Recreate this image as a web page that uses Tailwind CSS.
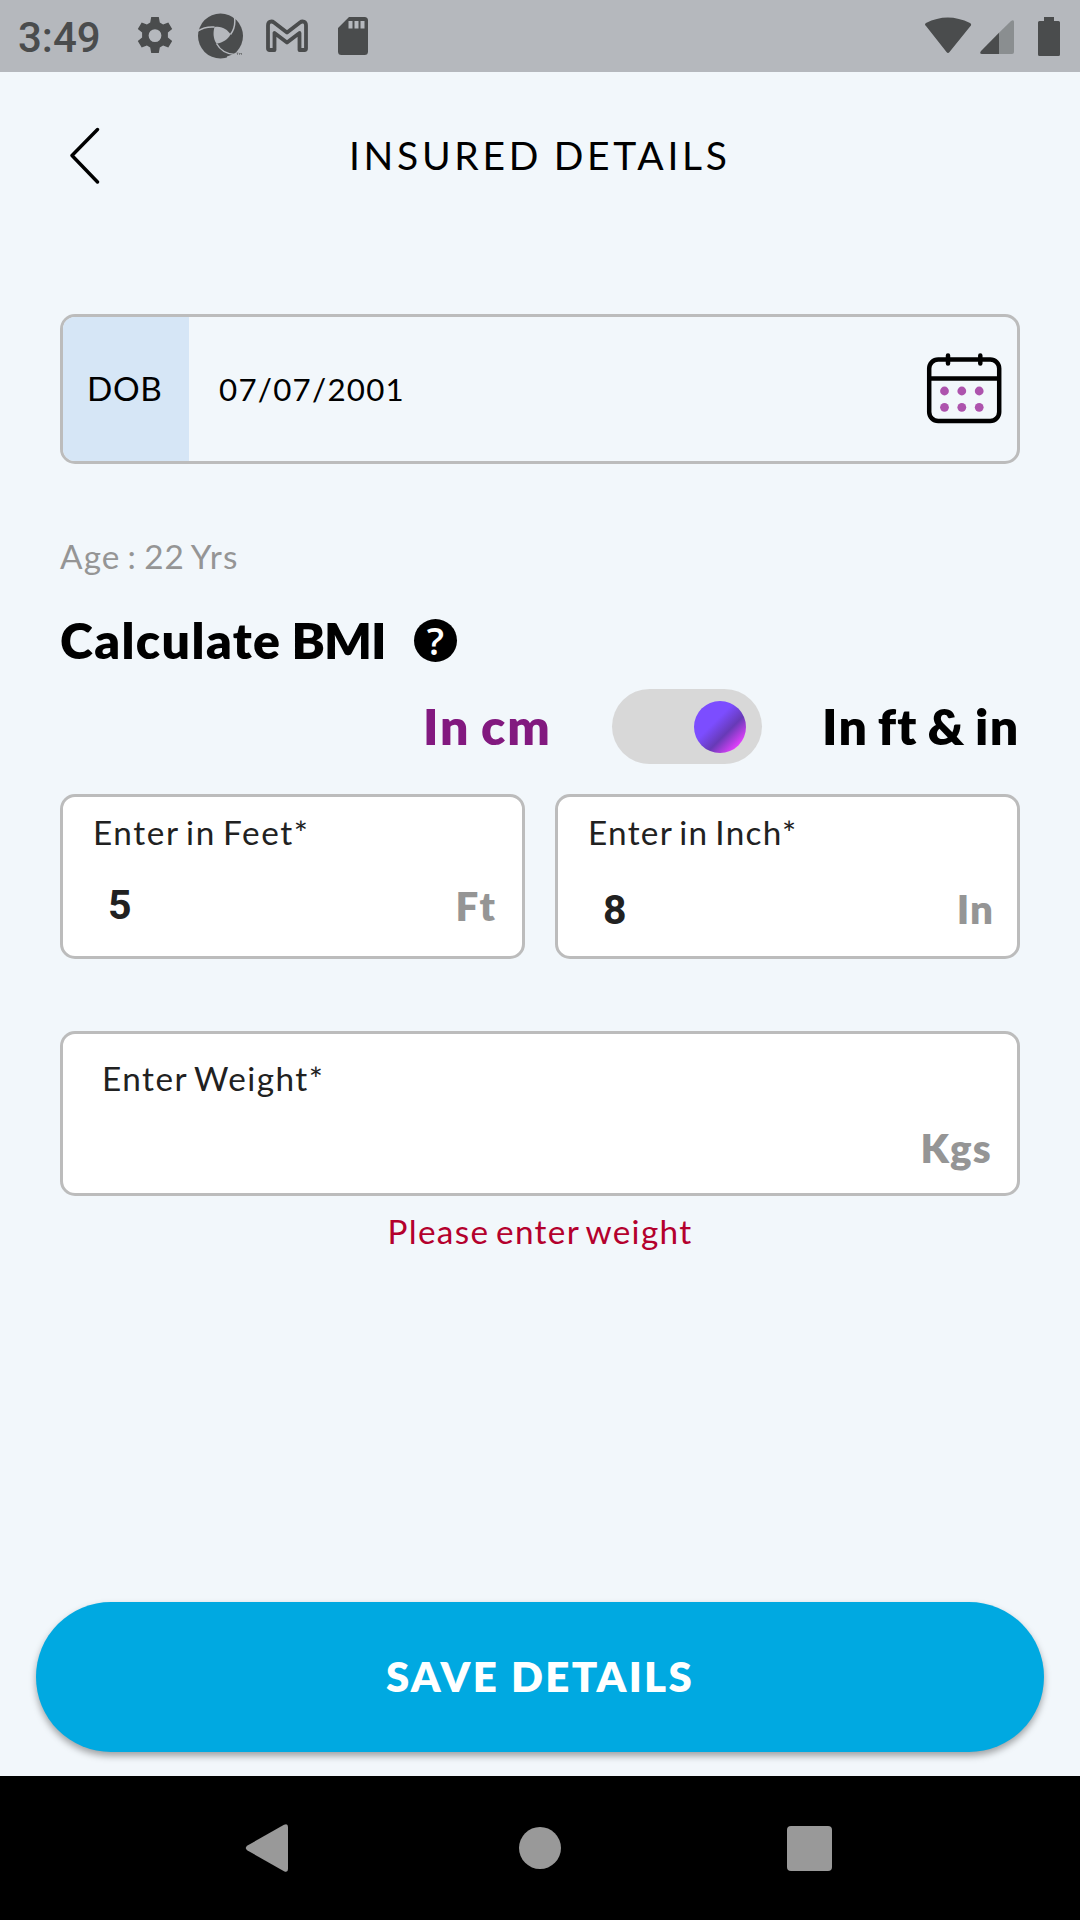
<!DOCTYPE html>
<html lang="en">
<head>
<meta charset="utf-8">
<title>Insured Details</title>
<script src="https://cdn.jsdelivr.net/npm/@tailwindcss/browser@4"></script>
</head>
<body class="bg-[#f2f7fb]">
<div class="flex h-[1920px] w-[1080px] flex-col overflow-hidden bg-[#f2f7fb] font-['Lato','Open_Sans',sans-serif] text-black">

  <!-- Status bar -->
  <div class="flex h-[72px] shrink-0 items-center bg-[#b5b8bd] pl-[18px] text-[#4a4c4d]">
    <span class="w-[117px] font-['Roboto',sans-serif] text-[42px] leading-[72px] font-medium whitespace-nowrap pt-[3px]">3:49</span>
    <svg class="h-10 w-10 shrink-0" viewBox="0 0 40 40" fill="currentColor">
      <path fill-rule="evenodd" d="M16.200 1h7.600l1 5.500 3.300 1.900 5.200-2 3.900 6.700-4.300 3.500v4.800l4.300 3.500-3.900 6.700-5.200-2-3.300 1.900-1 5.500h-7.600l-1-5.500-3.300-1.900-5.200 2-3.900-6.700 4.300-3.500v-4.800L2.800 13.100l3.900-6.700 5.200 2 3.300-1.900zM20 13.200a6.400 6.400 0 1 0 0 12.800 6.400 6.400 0 0 0 0-12.800z"/>
    </svg>
    <svg class="ml-[22px] h-[46px] w-[48px] shrink-0" viewBox="0 0 48 46">
      <circle cx="23.500" cy="23" r="22.500" fill="currentColor"/>
      <path d="M17.500 14C25 12.500 31 17 33.500 21.500C31 26 26 30 19.500 30.500C16 26 16 19 17.500 14Z" fill="#b5b8bd"/>
      <path d="M0 18.500C6 14.500 12 13.500 17.500 14M37.500 4C38.500 11 37 17 33.500 21.500M19.500 30.500C23 37 29 41 38 41.500" fill="none" stroke="#b5b8bd" stroke-width="1.500"/>
      <path d="M30 43.500L38 40.500l2 2-5 3.500h-5z" fill="#b5b8bd"/>
      <path d="M39.500 40h2M40.500 40v2M42.500 42v-2l1 1 1-1v2" fill="none" stroke="currentColor" stroke-width=".5"/>
    </svg>
    <svg class="ml-[20px] h-[34px] w-[44px] shrink-0" viewBox="0 0 44 34" fill="none" stroke="currentColor" stroke-width="3.800" stroke-linejoin="round">
      <path d="M3 29.500V6.500C3 2.500 6.500 1.500 9 3.500L22 13.500L35 3.500C37.500 1.500 41 2.500 41 6.500V29.500Q41 31 39.500 31H34.500V14L22 23.500L9.500 14V31H4.500Q3 31 3 29.500Z"/>
    </svg>
    <svg class="ml-[28px] h-[38px] w-[32px] shrink-0" viewBox="0 0 32 38" fill="currentColor">
      <path fill-rule="evenodd" d="M12 0H27.500Q31 0 31 3.500V34.500Q31 38 27.500 38H4.500Q1 38 1 34.500V11zM11.500 4v7.500h4V4zM17.500 4v7.500h4V4zM23.500 4v7.500h4V4z"/>
    </svg>
    <svg class="ml-auto h-[38px] w-[48px] shrink-0" viewBox="0 0 48 38" fill="currentColor">
      <path d="M2 9Q0 7.500 2 6Q23.500-5 46 6Q48 7.500 46.500 9L25.500 35Q24 37 22.500 35z"/>
    </svg>
    <svg class="ml-[7px] mt-[2px] h-[36px] w-[36px] shrink-0" viewBox="0 0 36 36">
      <path d="M20 13.800L32 2Q35 0 35 3V33Q35 35 33 35H20z" fill="#8a8e90"/>
      <path d="M20 13.800V35H3Q0 35 2 32z" fill="currentColor"/>
    </svg>
    <svg class="mr-[20px] ml-[23px] h-[39px] w-[22px] shrink-0" viewBox="0 0 22 39" fill="currentColor">
      <path d="M6 0H16V4H20.500Q22 4 22 5.500V37.500Q22 39 20.500 39H1.500Q0 39 0 37.500V5.500Q0 4 1.500 4H6z"/>
    </svg>
  </div>

  <!-- Header -->
  <header class="flex h-[168px] shrink-0 items-center pl-[70px]">
    <svg class="h-[58px] w-[30px] shrink-0" viewBox="0 0 30 58" fill="none" stroke="#000" stroke-width="3.400" stroke-linecap="round" stroke-linejoin="round"><path d="M27.500 2.500L2 28.500L27.500 55"/></svg>
    <h1 class="-mt-0.5 ml-[249px] text-[39px] leading-[60px] tracking-[3.700px] [word-spacing:-2px] whitespace-nowrap">INSURED DETAILS</h1>
  </header>

  <main class="flex flex-1 flex-col px-[60px] pt-[74px]">
    <!-- Date of birth -->
    <div class="flex h-[150px] shrink-0 items-center overflow-hidden rounded-[15px] border-[3px] border-[#bcbcbc]">
      <div class="flex h-full w-[126px] items-center bg-[#d6e6f6] pl-[24px] text-[33.300px] tracking-[0.600px]">DOB</div>
      <div class="ml-[30px] text-[31.300px] tracking-[1.250px]">07/07/2001</div>
      <svg class="mr-[15px] ml-auto h-[72px] w-[76px]" viewBox="0 0 76 72" fill="none" stroke="#000">
        <rect x="3.200" y="6.500" width="70" height="61.500" rx="9" stroke-width="4.500"/>
        <path d="M3 25.500H73" stroke-width="4.500"/>
        <path d="M22 2.500v8M54.300 2.500v8" stroke-width="4.500" stroke-linecap="round"/>
        <g fill="#ad53ad" stroke="none">
          <circle cx="18.500" cy="38" r="4.400"/><circle cx="35.800" cy="38" r="4.400"/><circle cx="53.200" cy="38" r="4.400"/>
          <circle cx="18.500" cy="54.300" r="4.400"/><circle cx="35.800" cy="54.300" r="4.400"/><circle cx="53.200" cy="54.300" r="4.400"/>
        </g>
      </svg>
    </div>

    <p class="mt-[72px] text-[33.300px] leading-[40px] tracking-[1.100px] [word-spacing:-2.500px] text-[#959595]">Age : 22 Yrs</p>

    <div class="mt-[34px] flex h-[60px] items-center">
      <h2 class="w-[354px] text-[50px] leading-[60px] font-extrabold tracking-[1.400px] [word-spacing:-3px] whitespace-nowrap">Calculate <span class="tracking-[-1px]">BMI</span></h2>
      <span class="flex h-[43px] w-[43px] items-center justify-center rounded-full bg-black font-['Open_Sans',sans-serif] text-[38px] leading-[43px] font-semibold text-white">?</span>
    </div>

    <!-- Unit switch -->
    <div class="mt-[19px] flex h-[75px] items-center text-[50px] font-extrabold whitespace-nowrap">
      <span class="ml-[363px] w-[189px] tracking-[1.900px] [word-spacing:-3px] text-[#82197f]">In cm</span>
      <div class="flex h-[75px] w-[150px] shrink-0 items-center justify-end rounded-full bg-[#d8d8d8] pr-4">
        <div class="h-[52px] w-[52px] rounded-full bg-[linear-gradient(135deg,#7c4dff_0%,#7c4dff_40%,#673ab7_62%,#e040fb_85%)]"></div>
      </div>
      <span class="ml-[60px] tracking-[1.200px] [word-spacing:-3px]">In ft &amp; in</span>
    </div>

    <!-- Height -->
    <div class="mt-[30px] grid grid-cols-2 gap-[30px] text-[#212121]">
      <div class="h-[165px] rounded-[15px] border-[3px] border-[#bcbcbc] bg-white pt-[15px] pl-[30px]">
        <div class="text-[33.300px] leading-[40px] tracking-[1.600px] [word-spacing:-3px]">Enter in Feet*</div>
        <div class="mt-[29px] flex items-center justify-between pr-[25px] pl-[15px] leading-[44px]">
          <span class="font-['Roboto',sans-serif] text-[41px] font-bold">5</span>
          <span class="pt-[3px] text-[40.300px] font-extrabold tracking-[2px] text-[#959595]">Ft</span>
        </div>
      </div>
      <div class="h-[165px] rounded-[15px] border-[3px] border-[#bcbcbc] bg-white pt-[15px] pl-[30px]">
        <div class="text-[33.300px] leading-[40px] tracking-[1.300px] [word-spacing:-3px]">Enter in Inch*</div>
        <div class="mt-[33px] flex items-center justify-between pr-[23px] pl-[15px] leading-[44px]">
          <span class="pt-[3px] font-['Roboto',sans-serif] text-[41px] font-bold">8</span>
          <span class="text-[40.300px] font-extrabold tracking-[1px] text-[#959595]">In</span>
        </div>
      </div>
    </div>

    <!-- Weight -->
    <div class="mt-[72px] h-[165px] shrink-0 rounded-[15px] border-[3px] border-[#bcbcbc] bg-white pt-[24px] pr-[25px] pl-[39px] text-[#212121]">
      <div class="text-[33.300px] leading-[40px] tracking-[1.500px] [word-spacing:-3px]">Enter Weight*</div>
      <div class="mt-[26px] text-right text-[40.300px] leading-[48px] font-extrabold tracking-[1.200px] text-[#959595]">Kgs</div>
    </div>
    <p class="mt-[15px] text-center text-[33.300px] leading-[40px] tracking-[1.300px] [word-spacing:-3px] text-[#b4002d]">Please enter weight</p>

    <button class="-mx-6 mt-auto mb-6 flex h-[150px] shrink-0 items-center justify-center rounded-full bg-[#00a9e1] pb-[2px] text-[42px] font-extrabold tracking-[2.300px] text-white shadow-[0_4px_7px_rgba(0,0,0,0.35)]">SAVE DETAILS</button>
  </main>

  <!-- Navigation bar -->
  <nav class="flex h-36 shrink-0 items-center bg-black pl-[245px] text-[#999]">
    <svg class="h-12 w-11" viewBox="0 0 44 48" fill="currentColor"><path d="M39 .8Q43-1 43 3V45Q43 49 39 47.200L2.500 26.500Q-1 24 2.500 21.500z"/></svg>
    <div class="ml-[230px] h-[42px] w-[42px] rounded-full bg-[#999]"></div>
    <div class="ml-[226px] h-[45px] w-[45px] rounded-[4px] bg-[#999]"></div>
  </nav>
</div>
</body>
</html>
